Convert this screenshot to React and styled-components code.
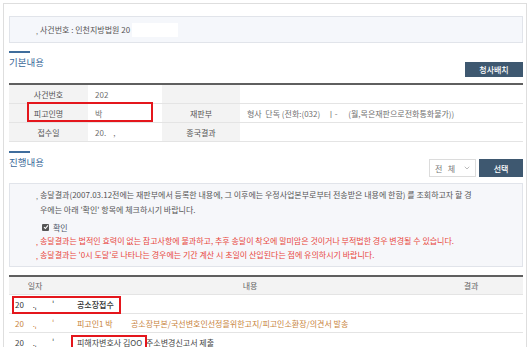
import React from "react";
import styled, { createGlobalStyle } from "styled-components";
import { ChevronDown } from "lucide-react";

/* ============================ Styles ============================ */
const Global = createGlobalStyle`
  html, body { margin: 0; padding: 0; background: #ffffff; }
  body {
    font-family: "Noto Sans CJK KR", "Noto Sans", "Liberation Sans", sans-serif;
    font-size: 8px;
    color: #555555;
  }
`;

const Frame = styled.div` // 전체 테두리
  position: relative;
  box-sizing: border-box;
  width: 524px;
  height: 344px;
  margin: 3px 0 0 3px;
  padding: 12px 3px 0 5px;
  border: 1px solid #dedede;
  border-bottom: none;
  overflow: hidden;
`;

const Patch = styled.div` // 가림 처리된 부분
  position: absolute;
  top: -2px;
  left: ${(p) => p.$left}px;
  width: ${(p) => p.$width}px;
  height: 4px;
  background: #ffffff;
`;

const CaseBox = styled.div`
  display: flex;
  align-items: center;
  height: 27px;
  box-sizing: border-box;
  padding-left: 26px;
  background: #f5f7fb;
  border: 1px solid #e1e4ea;
  color: #555555;
  font-size: 8px;
`;

const Bullet = styled.span`
  flex: 0 0 4px;
  width: 4px;
  color: ${(p) => p.$color || "#777777"};
  font-size: 7px;
  line-height: 1;
  align-self: flex-start;
  margin-top: ${(p) => p.$top || 6}px;
`;

const CaseBullet = styled.span`
  width: 4px;
  color: #777777;
  font-size: 7px;
  margin-top: 3px;
`;

const Blank = styled.span`
  display: inline-block;
  width: 46px;
  height: 14px;
  margin-left: 2px;
  background: #ffffff;
`;

const SectionHead = styled.div`
  display: flex;
  justify-content: space-between;
  align-items: flex-end;
  height: 26px;
  margin-top: ${(p) => p.$top}px;
  margin-bottom: 6px;
`;

const Title = styled.div`
  align-self: flex-start;
  display: flex;
  flex-direction: column;
  &::before {
    content: "";
    display: block;
    width: 21px;
    height: 2px;
    background: #3f6d9c;
    margin-bottom: 3px;
  }
  color: #3a6898;
  font-size: 9.5px;
  line-height: 12px;
`;

const Controls = styled.div`
  display: flex;
  gap: 3px;
`;

const DarkButton = styled.div`
  display: flex;
  align-items: center;
  justify-content: center;
  width: ${(p) => p.$w}px;
  height: ${(p) => p.$h}px;
  background: #3e5870;
  color: #ffffff;
  font-size: 8px;
  font-weight: 500;
`;

const Select = styled.div`
  display: flex;
  align-items: center;
  justify-content: space-between;
  box-sizing: border-box;
  width: 47px;
  height: 18px;
  padding: 0 4px 0 5px;
  background: #ffffff;
  border: 1px solid #dcdcdc;
  color: #777777;
  font-size: 8px;
  white-space: pre;
`;

const InfoTable = styled.div`
  position: relative;
  display: grid;
  grid-template-columns: 79px 74px 78px 1fr;
  border-top: 2px solid #5f5f5f;
`;

const Cell = styled.div`
  display: flex;
  align-items: center;
  justify-content: ${(p) => (p.$label ? "center" : "flex-start")};
  height: 19px;
  box-sizing: border-box;
  padding-left: ${(p) => (p.$label ? 0 : 7)}px;
  background: ${(p) => (p.$label ? "#f3f3f3" : "#ffffff")};
  border-bottom: 1px solid #e4e4e4;
  color: ${(p) => (p.$label ? "#555555" : "#707070")};
  font-size: 8px;
  white-space: pre;
`;

const RedBox = styled.div` // 강조 표시 (빨간 테두리)
  position: absolute;
  left: ${(p) => p.$x}px;
  top: ${(p) => p.$y}px;
  width: ${(p) => p.$w}px;
  height: ${(p) => p.$h}px;
  box-sizing: border-box;
  border: 2.5px solid #e4161c;
  pointer-events: none;
`;

const Notice = styled.div`
  box-sizing: border-box;
  height: 84px;
  padding: 3px 0 0 26px;
  background: #f6f7fa;
  border: 1px solid #e1e4ea;
`;

const NoticeItem = styled.div`
  display: flex;
  color: ${(p) => (p.$red ? "#e8463c" : "#555555")};
  font-size: 8px;
  line-height: ${(p) => (p.$red ? 14 : 15)}px;
`;

const CheckRow = styled.div`
  display: flex;
  align-items: center;
  gap: 4px;
  height: 14px;
  margin: 3px 0 0 6px;
  color: #4f5a6a;
  font-size: 8px;
`;

const CheckMark = styled.span`
  display: flex;
  align-items: center;
  justify-content: center;
  width: 7px;
  height: 7px;
  background: #555555;
  border-radius: 1px;
`;

const ProgressTable = styled.div`
  position: relative;
  margin-top: 8px;
  border-top: 2px solid #5f5f5f;
`;

const Row = styled.div`
  display: grid;
  grid-template-columns: 62px 358px 1fr;
  height: ${(p) => (p.$head ? 18 : 19)}px;
  box-sizing: border-box;
  align-items: center;
  background: ${(p) => (p.$head ? "#f3f3f3" : "#ffffff")};
  border-bottom: 1px solid #e4e4e4;
  color: ${(p) => p.$color || "#555555"};
  font-size: 8px;
`;

const HeadCell = styled.div`
  text-align: center;
  color: #666666;
  padding-right: ${(p) => p.$pr || 0}px;
`;

const DateCell = styled.div`
  padding-left: 6px;
  white-space: pre;
`;

const ContentCell = styled.div`
  display: flex;
  padding-left: 6px;
  white-space: pre;
  font-weight: ${(p) => (p.$strong ? 500 : 400)};
`;

const Who = styled.span`
  width: ${(p) => p.$w}px;
`;

/* ============================ Data ============================ */
const progress = [
  { date: "20     .ˌ         ˈ", who: "공소장접수", what: "", color: "#333333", w: 60, strong: true },
  { date: "20     .ˌ         ˈ", who: "피고인1 박", what: "공소장부본/국선변호인선정을위한고지/피고인소환장/의견서 발송", color: "#c8843c", w: 54 },
  { date: "20     .ˌ         ˈ", who: "피해자변호사 김OO", what: "주소변경신고서 제출", color: "#444444", w: 69 },
];

/* ============================ Main ============================ */
export default function App() {
  return (
    <>
      <Global />
      <Frame>
        <Patch $left={93} $width={93} />
        <Patch $left={357} $width={93} />

        <CaseBox>
          <CaseBullet>,</CaseBullet>
          사건번호 : 인천지방법원 20<Blank />
        </CaseBox>

        <SectionHead $top={8}>
          <Title>기본내용</Title>
          <DarkButton $w={58} $h={15}>청사배치</DarkButton>
        </SectionHead>

        <InfoTable>
          <Cell $label>사건번호</Cell>
          <Cell>202</Cell>
          <Cell $label />
          <Cell />
          <Cell $label>피고인명</Cell>
          <Cell>박</Cell>
          <Cell $label>재판부</Cell>
          <Cell>{"형사  단독 (전화:(032)    ㅣ-      (월,목은재판으로전화통화불가))"}</Cell>
          <Cell $label>접수일</Cell>
          <Cell>{"20.    ,"}</Cell>
          <Cell $label>종국결과</Cell>
          <Cell />
          <RedBox $x={18} $y={17} $w={126} $h={20} />
        </InfoTable>

        <SectionHead $top={9}>
          <Title>진행내용</Title>
          <Controls>
            <Select>
              {"전   체"}
              <ChevronDown size={8} strokeWidth={1.5} color="#777" />
            </Select>
            <DarkButton $w={44} $h={18}>선택</DarkButton>
          </Controls>
        </SectionHead>

        <Notice>
          <NoticeItem>
            <Bullet>,</Bullet>
            <div>
              송달결과(2007.03.12전에는 재판부에서 등록한 내용에, 그 이후에는 우정사업본부로부터 전송받은 내용에 한함) 를 조회하고자 할 경
              <br />
              우에는 아래 '확인' 항목에 체크하시기 바랍니다.
            </div>
          </NoticeItem>
          <CheckRow>
            <CheckMark>
              <svg width="6" height="6" viewBox="0 0 6 6">
                <path d="M1 3.2 L2.4 4.5 L5 1.4" fill="none" stroke="#fff" strokeWidth="1.1" />
              </svg>
            </CheckMark>
            확인
          </CheckRow>
          <NoticeItem $red>
            <Bullet $color="#e8463c" $top={5}>,</Bullet>
            <div>송달결과는 법적인 효력이 없는 참고사항에 불과하고, 추후 송달이 착오에 말미암은 것이거나 부적법한 경우 변경될 수 있습니다.</div>
          </NoticeItem>
          <NoticeItem $red>
            <Bullet $color="#e8463c" $top={5}>,</Bullet>
            <div>송달결과는 '0시 도달'로 나타나는 경우에는 기간 계산 시 초일이 산입된다는 점에 유의하시기 바랍니다.</div>
          </NoticeItem>
        </Notice>

        <ProgressTable>
          <Row $head>
            <HeadCell $pr={10}>일자</HeadCell>
            <HeadCell>내용</HeadCell>
            <HeadCell $pr={10}>결과</HeadCell>
          </Row>
          {progress.map((p, i) => (
            <Row key={i} $color={p.color}>
              <DateCell>{p.date}</DateCell>
              <ContentCell $strong={p.strong}>
                <Who $w={p.w}>{p.who}</Who>
                {p.what}
              </ContentCell>
              <div />
            </Row>
          ))}
          <RedBox $x={3} $y={19} $w={109} $h={18} />
          <RedBox $x={62} $y={58} $w={76} $h={16} />
        </ProgressTable>
      </Frame>
    </>
  );
}
